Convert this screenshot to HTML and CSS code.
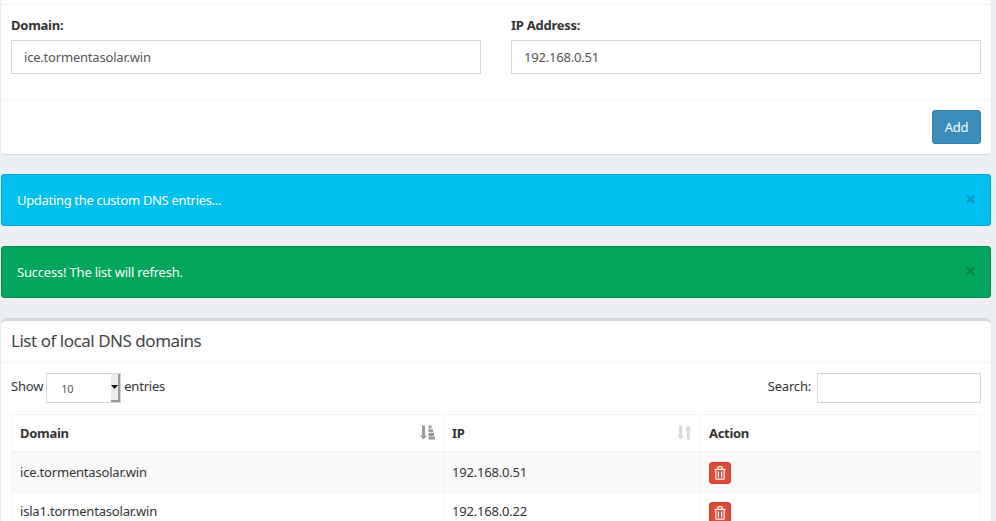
FILE: index.html
```html
<!DOCTYPE html>
<html lang="en">
<head>
<meta charset="utf-8">
<title>Local DNS</title>
<link rel="stylesheet" href="styles.css">
</head>
<body>
<div class="page">
  <section class="box form-box">
    <div class="box-header"></div>
    <div class="box-body form-grid">
      <div class="field">
        <label class="field-label" for="domain">Domain:</label>
        <input class="text-input" id="domain" type="text" value="ice.tormentasolar.win">
      </div>
      <div class="field">
        <label class="field-label" for="ip">IP Address:</label>
        <input class="text-input" id="ip" type="text" value="192.168.0.51">
      </div>
    </div>
    <div class="box-footer"><button class="btn-add" type="button">Add</button></div>
  </section>

  <div class="alert alert-info"><span>Updating the custom DNS entries...</span><span class="alert-close">×</span></div>
  <div class="alert alert-success"><span>Success! The list will refresh.</span><span class="alert-close">×</span></div>

  <section class="box list-box">
    <div class="list-header"><h3 class="list-title">List of local DNS domains</h3></div>
    <div class="list-body">
      <div class="table-controls">
        <div class="length-control">
          <span>Show</span>
          <span class="select-wrap">
            <span class="select-value">10</span>
            <span class="select-arrow"><svg width="7" height="4" viewBox="0 0 7 4"><path d="M0 0h7L3.5 4z" fill="#111"/></svg></span>
          </span>
          <span>entries</span>
        </div>
        <div class="search-control">
          <label for="search">Search:</label>
          <input class="search-input" id="search" type="search">
        </div>
      </div>
      <table class="dns-table">
        <colgroup><col class="col-domain"><col class="col-ip"><col class="col-action"></colgroup>
        <thead>
          <tr>
            <th><div class="th-inner">Domain
              <svg class="sort-icon" width="15" height="15" viewBox="0 0 15 15" fill="#999"><path d="M2 .5h3v10h2L3.5 14.5 0 10.5h2z"/><path d="M8.5 .5h3v3h-3zM8.5 4.2h4.5v3H8.5zM8.5 7.9h5.5v3H8.5zM8.5 11.6h6.5v2.9H8.5z"/></svg>
            </div></th>
            <th><div class="th-inner">IP
              <svg class="sort-icon" width="15" height="15" viewBox="0 0 15 15" fill="#d6d8da"><path d="M2.2 .5h2.8v10h2.1l-3.5 4-3.5-4h2.1z"/><path d="M9.8 14.5v-10H7.7l3.5-4 3.5 4h-2.1v10z"/></svg>
            </div></th>
            <th>Action</th>
          </tr>
        </thead>
        <tbody>
          <tr class="odd">
            <td>ice.tormentasolar.win</td><td>192.168.0.51</td>
            <td class="action-cell"><button class="btn-del" type="button" aria-label="Delete"><svg width="12" height="14" viewBox="0 0 12 14" fill="none" stroke="#fff" stroke-width="1.2"><path d="M.5 3.4h11M3.9 3.4V1.4q0-.8.8-.8h2.6q.8 0 .8.8v2M1.8 3.4v8.9q0 .9.9.9h6.6q.9 0 .9-.9V3.4M4.4 5.4v5.8M7.6 5.4v5.8"/></svg></button></td>
          </tr>
          <tr>
            <td>isla1.tormentasolar.win</td><td>192.168.0.22</td>
            <td class="action-cell"><button class="btn-del" type="button" aria-label="Delete"><svg width="12" height="14" viewBox="0 0 12 14" fill="none" stroke="#fff" stroke-width="1.2"><path d="M.5 3.4h11M3.9 3.4V1.4q0-.8.8-.8h2.6q.8 0 .8.8v2M1.8 3.4v8.9q0 .9.9.9h6.6q.9 0 .9-.9V3.4M4.4 5.4v5.8M7.6 5.4v5.8"/></svg></button></td>
          </tr>
        </tbody>
      </table>
    </div>
  </section>
</div>
</body>
</html>
```
FILE: styles.css
```css
* { box-sizing: border-box; }
html, body { margin: 0; height: 521px; overflow: hidden; }
body {
  background: #ecf0f5;
  color: #333;
  font-family: "Noto Sans", "Open Sans", sans-serif;
  font-size: 13px;
  letter-spacing: -0.2px;
}
.page { padding: 0 5px 0 1px; }
.box {
  background: #fff;
  border-radius: 3px;
  box-shadow: 0 1px 1px rgba(0,0,0,.1);
}
.form-box { margin-bottom: 20px; }
.box-header { height: 5px; border-bottom: 1px solid #f4f4f4; }
.form-grid {
  display: grid;
  grid-template-columns: 470px 470px;
  column-gap: 30px;
  padding: 10px 10px 25px;
  height: 94px;
}
.field-label { display: block; height: 25px; font-weight: 700; line-height: 20px; letter-spacing: -0.25px; }
.text-input, .search-input {
  display: block;
  border: 1px solid #d2d6de;
  background: #fff;
  color: #555;
  font: inherit;
  letter-spacing: inherit;
  outline: none;
  border-radius: 0;
}
.text-input { width: 100%; height: 34px; padding: 0 12px; }
.box-footer {
  height: 55px;
  border-top: 1px solid #f4f4f4;
  padding: 10px;
  display: flex;
  justify-content: flex-end;
}
.btn-add {
  width: 49px;
  height: 34px;
  background: #3c8dbc;
  border: 1px solid #367fa9;
  border-radius: 3px;
  color: #fff;
  font: inherit;
  letter-spacing: inherit;
  padding: 0;
}
.alert {
  height: 52px;
  margin-bottom: 20px;
  border-radius: 3px;
  border: 1px solid;
  padding: 0 15px;
  color: #fff;
  display: flex;
  align-items: center;
  justify-content: space-between;
}
.alert-info { background: #00c0ef; border-color: #00acd6; letter-spacing: -0.32px; }
.alert-success { background: #00a65a; border-color: #008d4c; }
.alert-close { font-size: 20px; font-weight: 700; color: #000; opacity: .2; margin-top: -2px; margin-right: -1px; line-height: 1; }
.list-box { border-radius: 6px 6px 3px 3px; border-top: 3px solid #d2d6de; }
.list-header { height: 42px; border-bottom: 1px solid #f4f4f4; padding: 0 10px 3px; display: flex; align-items: center; }
.list-title { margin: 0; font-size: 17px; font-weight: 400; color: #444; letter-spacing: -0.47px; }
.list-body { padding: 10px; }
.table-controls { display: flex; justify-content: space-between; height: 41px; }
.length-control, .search-control { display: flex; align-items: flex-start; gap: 3px; line-height: 27px; }
.search-control { gap: 6px; }
.select-wrap {
  display: flex;
  width: 75px;
  height: 30px;
  border: 1px solid #d2d6de;
  background: #fff;
  justify-content: space-between;
}
.select-value { font-size: 11px; padding-left: 14px; line-height: 30px; color: #555; }
.select-arrow {
  width: 9px;
  background: #ececec;
  border-right: 2px solid #999;
  border-bottom: 2px solid #999;
  display: flex;
  align-items: center;
  justify-content: center;
}
.search-input { width: 164px; height: 30px; padding: 0 6px; }
.dns-table { width: 970px; border-collapse: collapse; table-layout: fixed; border: 1px solid #f4f4f4; }
.col-domain { width: 432px; }
.col-ip { width: 257px; }
.dns-table th, .dns-table td { border: 1px solid #f4f4f4; padding: 8px; text-align: left; line-height: 20px; }
.dns-table th { height: 37px; padding: 7px 8px; border-bottom-width: 2px; font-weight: 700; letter-spacing: -0.3px; }
.dns-table td { height: 40px; padding: 7px 8px 9px; }
.dns-table tr.odd td { background: #f9f9f9; padding: 8px; }
.dns-table td.action-cell { padding: 8px; }
.th-inner { display: flex; justify-content: space-between; align-items: center; }
.btn-del {
  display: flex;
  align-items: center;
  justify-content: center;
  width: 22px;
  height: 22px;
  margin-top: 1px;
  background: #dd4b39;
  border: 1px solid #d73925;
  border-radius: 3px;
  padding: 0;
}
```
